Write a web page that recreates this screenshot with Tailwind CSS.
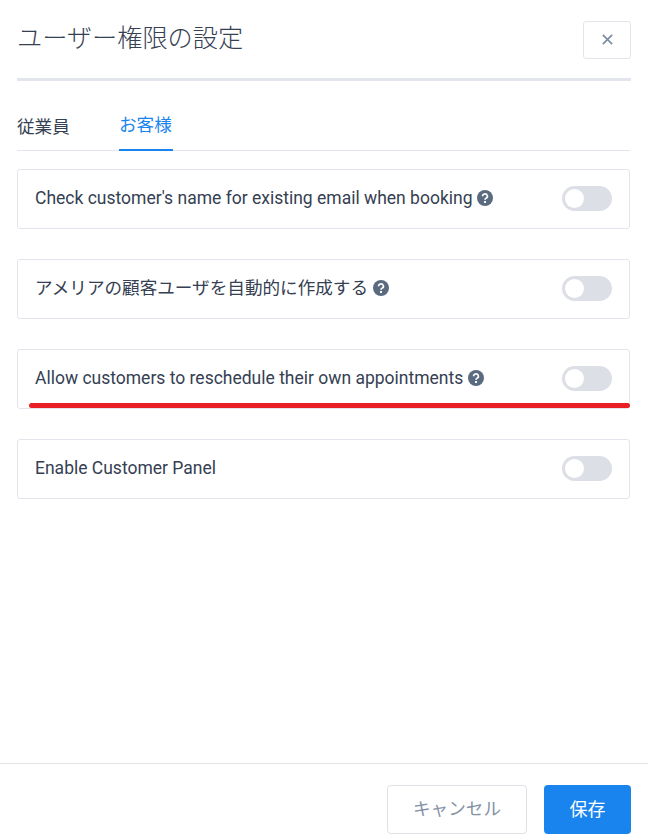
<!DOCTYPE html>
<html lang="ja">

<head>
    <meta charset="UTF-8">
    <meta name="viewport" content="width=device-width, initial-scale=1.0">
    <title>ユーザー権限の設定</title>
    <script src="https://cdn.jsdelivr.net/npm/@tailwindcss/browser@4"></script>
</head>

<body class="bg-white">
    <div class="relative w-[648px] h-[840px] flex flex-col overflow-hidden bg-white text-[#354052] font-['Roboto','Noto_Sans_CJK_JP',sans-serif]">
        <div class="flex-1 pl-[17px] pr-[17px]">
            <!-- Header -->
            <div class="flex justify-between items-start pt-[21px] h-[81px] border-b-[3px] border-[#e2e6ec]">
                <h1 class="text-[25.2px] leading-[36px] font-light">ユーザー権限の設定</h1>
                <button class="w-[48px] h-[38px] pb-[2px] flex items-center justify-center border border-[#e2e6ec] rounded-[3px]">
                    <svg width="11" height="11" viewBox="0 0 10 10" fill="none" stroke="#7f8fa4" stroke-width="1.6"><path d="M0.8 0.8 9.2 9.2M9.2 0.8 0.8 9.2" /></svg>
                </button>
            </div>

            <!-- Tabs -->
            <div class="flex h-[70px] border-b border-[#e2e6ec] text-[17.6px] mr-px">
                <div class="flex items-end pb-[11px] h-[70px] w-[102px]">従業員</div>
                <div class="flex items-end pb-[11px] h-[70px] w-[54px] text-[#1a84ee] border-b-2 border-[#1a84ee]">お客様</div>
            </div>

            <!-- Settings -->
            <div class="flex flex-col gap-[30px] mt-[18px] mr-px text-[17.5px]">
                <div class="h-[60px] flex items-center justify-between pl-[17px] pr-[17px] pb-[2px] border border-[#e2e6ec] rounded-[3px]">
                    <div class="flex items-center gap-[5px]">
                        <span>Check customer's name for existing email when booking</span>
                        <svg class="-ml-px" width="16" height="16" viewBox="0 0 16 16"><circle cx="8" cy="8" r="8" fill="#5b6b7f" /><path d="M5.6 6.2a2.4 2.2 0 1 1 3.6 1.9c-.8.5-1.2.9-1.2 1.7" fill="none" stroke="#fff" stroke-width="1.7" /><rect x="7" y="11" width="2" height="2" fill="#fff" /></svg>
                    </div>
                    <div class="w-[50px] h-[25px] rounded-full bg-[#dcdfe6] p-[3px]"><div class="w-[19px] h-[19px] rounded-full bg-white"></div></div>
                </div>
                <div class="h-[60px] flex items-center justify-between pl-[17px] pr-[17px] pb-[2px] border border-[#e2e6ec] rounded-[3px]">
                    <div class="flex items-center gap-[5px]">
                        <span class="text-[17.6px]">アメリアの顧客ユーザを自動的に作成する</span>
                        <svg width="16" height="16" viewBox="0 0 16 16"><circle cx="8" cy="8" r="8" fill="#5b6b7f" /><path d="M5.6 6.2a2.4 2.2 0 1 1 3.6 1.9c-.8.5-1.2.9-1.2 1.7" fill="none" stroke="#fff" stroke-width="1.7" /><rect x="7" y="11" width="2" height="2" fill="#fff" /></svg>
                    </div>
                    <div class="w-[50px] h-[25px] rounded-full bg-[#dcdfe6] p-[3px]"><div class="w-[19px] h-[19px] rounded-full bg-white"></div></div>
                </div>
                <div class="h-[60px] flex items-center justify-between pl-[17px] pr-[17px] pb-[2px] border border-[#e2e6ec] rounded-[3px]">
                    <div class="flex items-center gap-[5px]">
                        <span>Allow customers to reschedule their own appointments</span>
                        <svg width="16" height="16" viewBox="0 0 16 16"><circle cx="8" cy="8" r="8" fill="#5b6b7f" /><path d="M5.6 6.2a2.4 2.2 0 1 1 3.6 1.9c-.8.5-1.2.9-1.2 1.7" fill="none" stroke="#fff" stroke-width="1.7" /><rect x="7" y="11" width="2" height="2" fill="#fff" /></svg>
                    </div>
                    <div class="w-[50px] h-[25px] rounded-full bg-[#dcdfe6] p-[3px]"><div class="w-[19px] h-[19px] rounded-full bg-white"></div></div>
                </div>
                <div class="h-[60px] flex items-center justify-between pl-[17px] pr-[17px] pb-[2px] border border-[#e2e6ec] rounded-[3px]">
                    <span>Enable Customer Panel</span>
                    <div class="w-[50px] h-[25px] rounded-full bg-[#dcdfe6] p-[3px]"><div class="w-[19px] h-[19px] rounded-full bg-white"></div></div>
                </div>
            </div>
        </div>

        <!-- Footer -->
        <div class="h-[77px] border-t border-[#e4e4e4] flex justify-end gap-[17px] pt-[21px] pr-[17px]">
            <button class="w-[140px] h-[49px] border border-[#dfe1e6] rounded-[4px] text-[17.6px] text-[#8492a6]">キャンセル</button>
            <button class="w-[87px] h-[49px] rounded-[4px] bg-[#1a84ee] text-[18px] text-white">保存</button>
        </div>

        <!-- Red annotation line -->
        <div class="absolute left-[28.5px] top-[402.5px] w-[601px] h-[5.5px] rounded-full bg-[#e82025]"></div>
    </div>
</body>

</html>
